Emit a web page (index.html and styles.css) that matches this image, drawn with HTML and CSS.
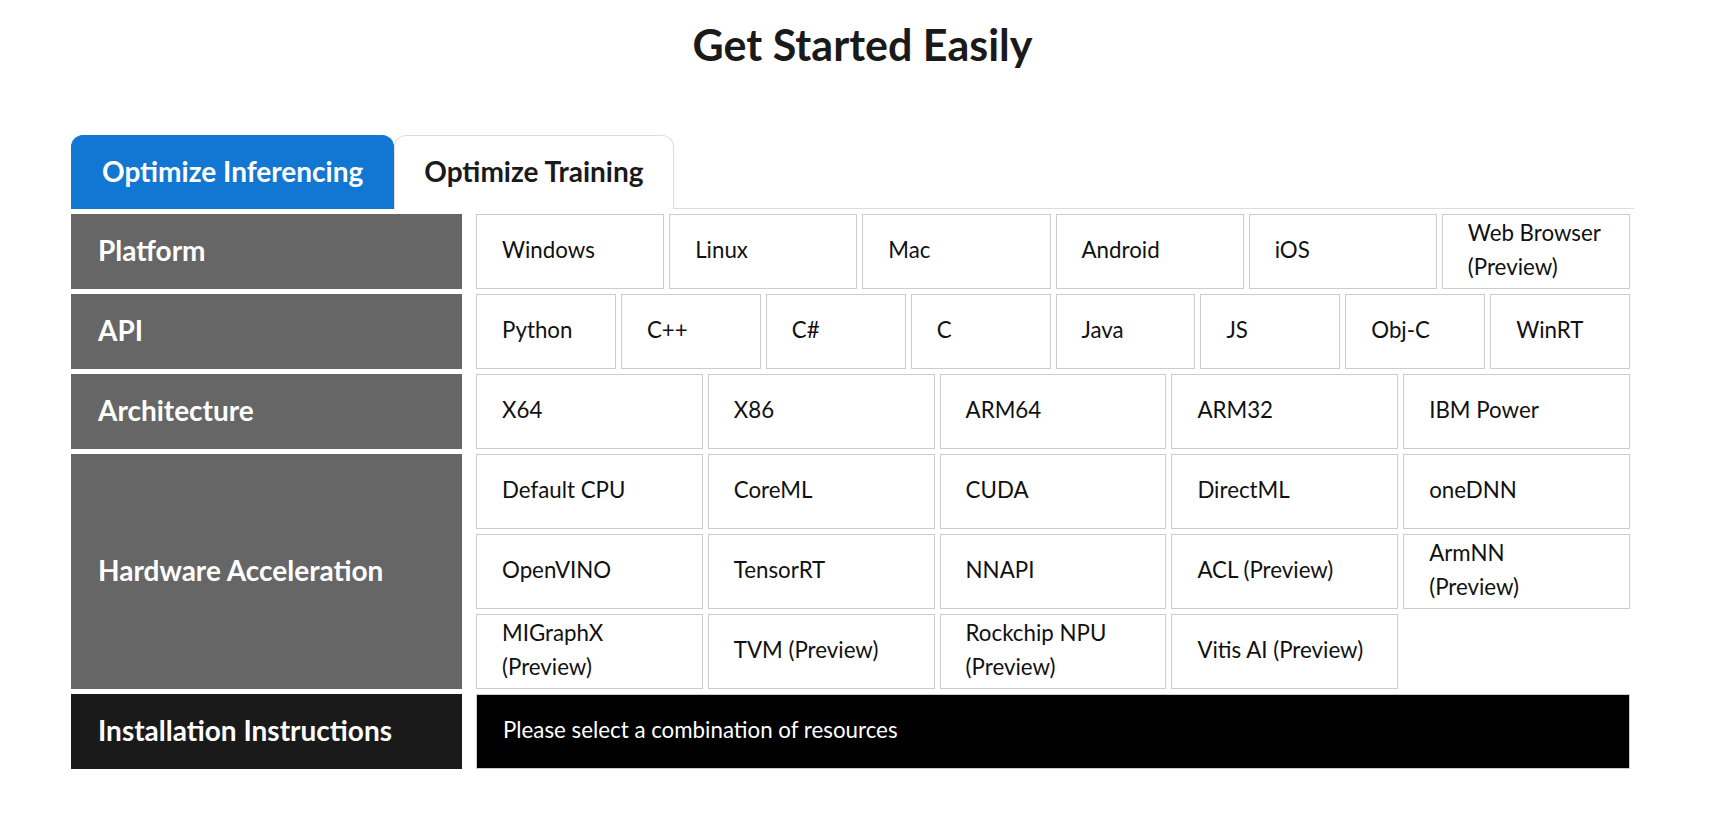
FILE: index.html
```html
<!DOCTYPE html>
<html lang="en">
<head>
<meta charset="utf-8">
<title>Get Started Easily</title>
<link rel="stylesheet" href="styles.css">
</head>
<body>
<main class="page">
  <h1 class="title">Get Started Easily</h1>
  <div class="tabs">
    <div class="tab tab-active">Optimize Inferencing</div>
    <div class="tab">Optimize Training</div>
  </div>
  <div class="matrix">
    <div class="row">
      <div class="label">Platform</div>
      <div class="options cols-6">
        <div class="opt">Windows</div>
        <div class="opt">Linux</div>
        <div class="opt">Mac</div>
        <div class="opt">Android</div>
        <div class="opt">iOS</div>
        <div class="opt">Web Browser<br>(Preview)</div>
      </div>
    </div>
    <div class="row">
      <div class="label">API</div>
      <div class="options cols-8">
        <div class="opt">Python</div>
        <div class="opt">C++</div>
        <div class="opt">C#</div>
        <div class="opt">C</div>
        <div class="opt">Java</div>
        <div class="opt">JS</div>
        <div class="opt">Obj-C</div>
        <div class="opt">WinRT</div>
      </div>
    </div>
    <div class="row">
      <div class="label">Architecture</div>
      <div class="options cols-5">
        <div class="opt">X64</div>
        <div class="opt">X86</div>
        <div class="opt">ARM64</div>
        <div class="opt">ARM32</div>
        <div class="opt">IBM Power</div>
      </div>
    </div>
    <div class="row">
      <div class="label">Hardware Acceleration</div>
      <div class="options cols-5">
        <div class="opt">Default CPU</div>
        <div class="opt">CoreML</div>
        <div class="opt">CUDA</div>
        <div class="opt">DirectML</div>
        <div class="opt">oneDNN</div>
        <div class="opt">OpenVINO</div>
        <div class="opt">TensorRT</div>
        <div class="opt">NNAPI</div>
        <div class="opt">ACL (Preview)</div>
        <div class="opt">ArmNN<br>(Preview)</div>
        <div class="opt">MIGraphX<br>(Preview)</div>
        <div class="opt">TVM (Preview)</div>
        <div class="opt">Rockchip NPU<br>(Preview)</div>
        <div class="opt">Vitis AI (Preview)</div>
      </div>
    </div>
    <div class="row">
      <div class="label label-dark">Installation Instructions</div>
      <div class="instructions">Please select a combination of resources</div>
    </div>
  </div>
</main>
</body>
</html>
```
FILE: styles.css
```css
* { box-sizing: border-box; }
html, body { margin: 0; padding: 0; background: #fff; }
body {
  font-family: Lato, "Open Sans", "Liberation Sans", sans-serif;
  color: #1a1a1a;
}
.page {
  width: 1563px;
  margin-left: 71px;
}
.title {
  margin: 0;
  padding-top: 20px;
  padding-left: 20px;
  height: 135px;
  font-size: 43px;
  line-height: 50px;
  font-weight: 700;
  text-align: center;
  color: #1a1a1a;
}
.tabs {
  display: flex;
  border-bottom: 1px solid #dddddd;
  height: 74px;
}
.tab {
  display: flex;
  align-items: center;
  height: 74px;
  margin-bottom: -1px;
  padding: 0 29px 3px;
  border: 1px solid #dddddd;
  border-bottom: none;
  border-radius: 12px 12px 0 0;
  background: #fff;
  font-size: 28px;
  font-weight: 700;
  color: #1a1a1a;
}
.tab-active {
  background: #1277d3;
  border-color: #1277d3;
  color: #fff;
  padding: 0 30px 3px;
}
.matrix {
  display: flex;
  flex-direction: column;
  gap: 5px;
  margin-top: 5px;
  width: 1559px;
}
.row {
  display: grid;
  grid-template-columns: 391px 1fr;
  column-gap: 14px;
}
.label {
  display: flex;
  align-items: center;
  padding: 0 0 3px 27px;
  background: #666666;
  color: #fff;
  font-size: 28px;
  font-weight: 700;
}
.label-dark { background: #1a1a1a; }
.options {
  display: grid;
  gap: 5px;
  grid-auto-rows: 75px;
}
.cols-5 { grid-template-columns: repeat(5, 1fr); }
.cols-6 { grid-template-columns: repeat(6, 1fr); }
.cols-8 { grid-template-columns: repeat(8, 1fr); }
.opt {
  display: flex;
  align-items: center;
  padding: 0 20px 4px 25px;
  border: 1px solid #cccccc;
  background: #fff;
  font-size: 22.3px;
  line-height: 34px;
  color: #111;
}
.instructions {
  display: flex;
  align-items: center;
  height: 75px;
  padding: 0 0 4px 26px;
  background: #000;
  border: 1px solid #cccccc;
  color: #fff;
  font-size: 22.3px;
}
```
